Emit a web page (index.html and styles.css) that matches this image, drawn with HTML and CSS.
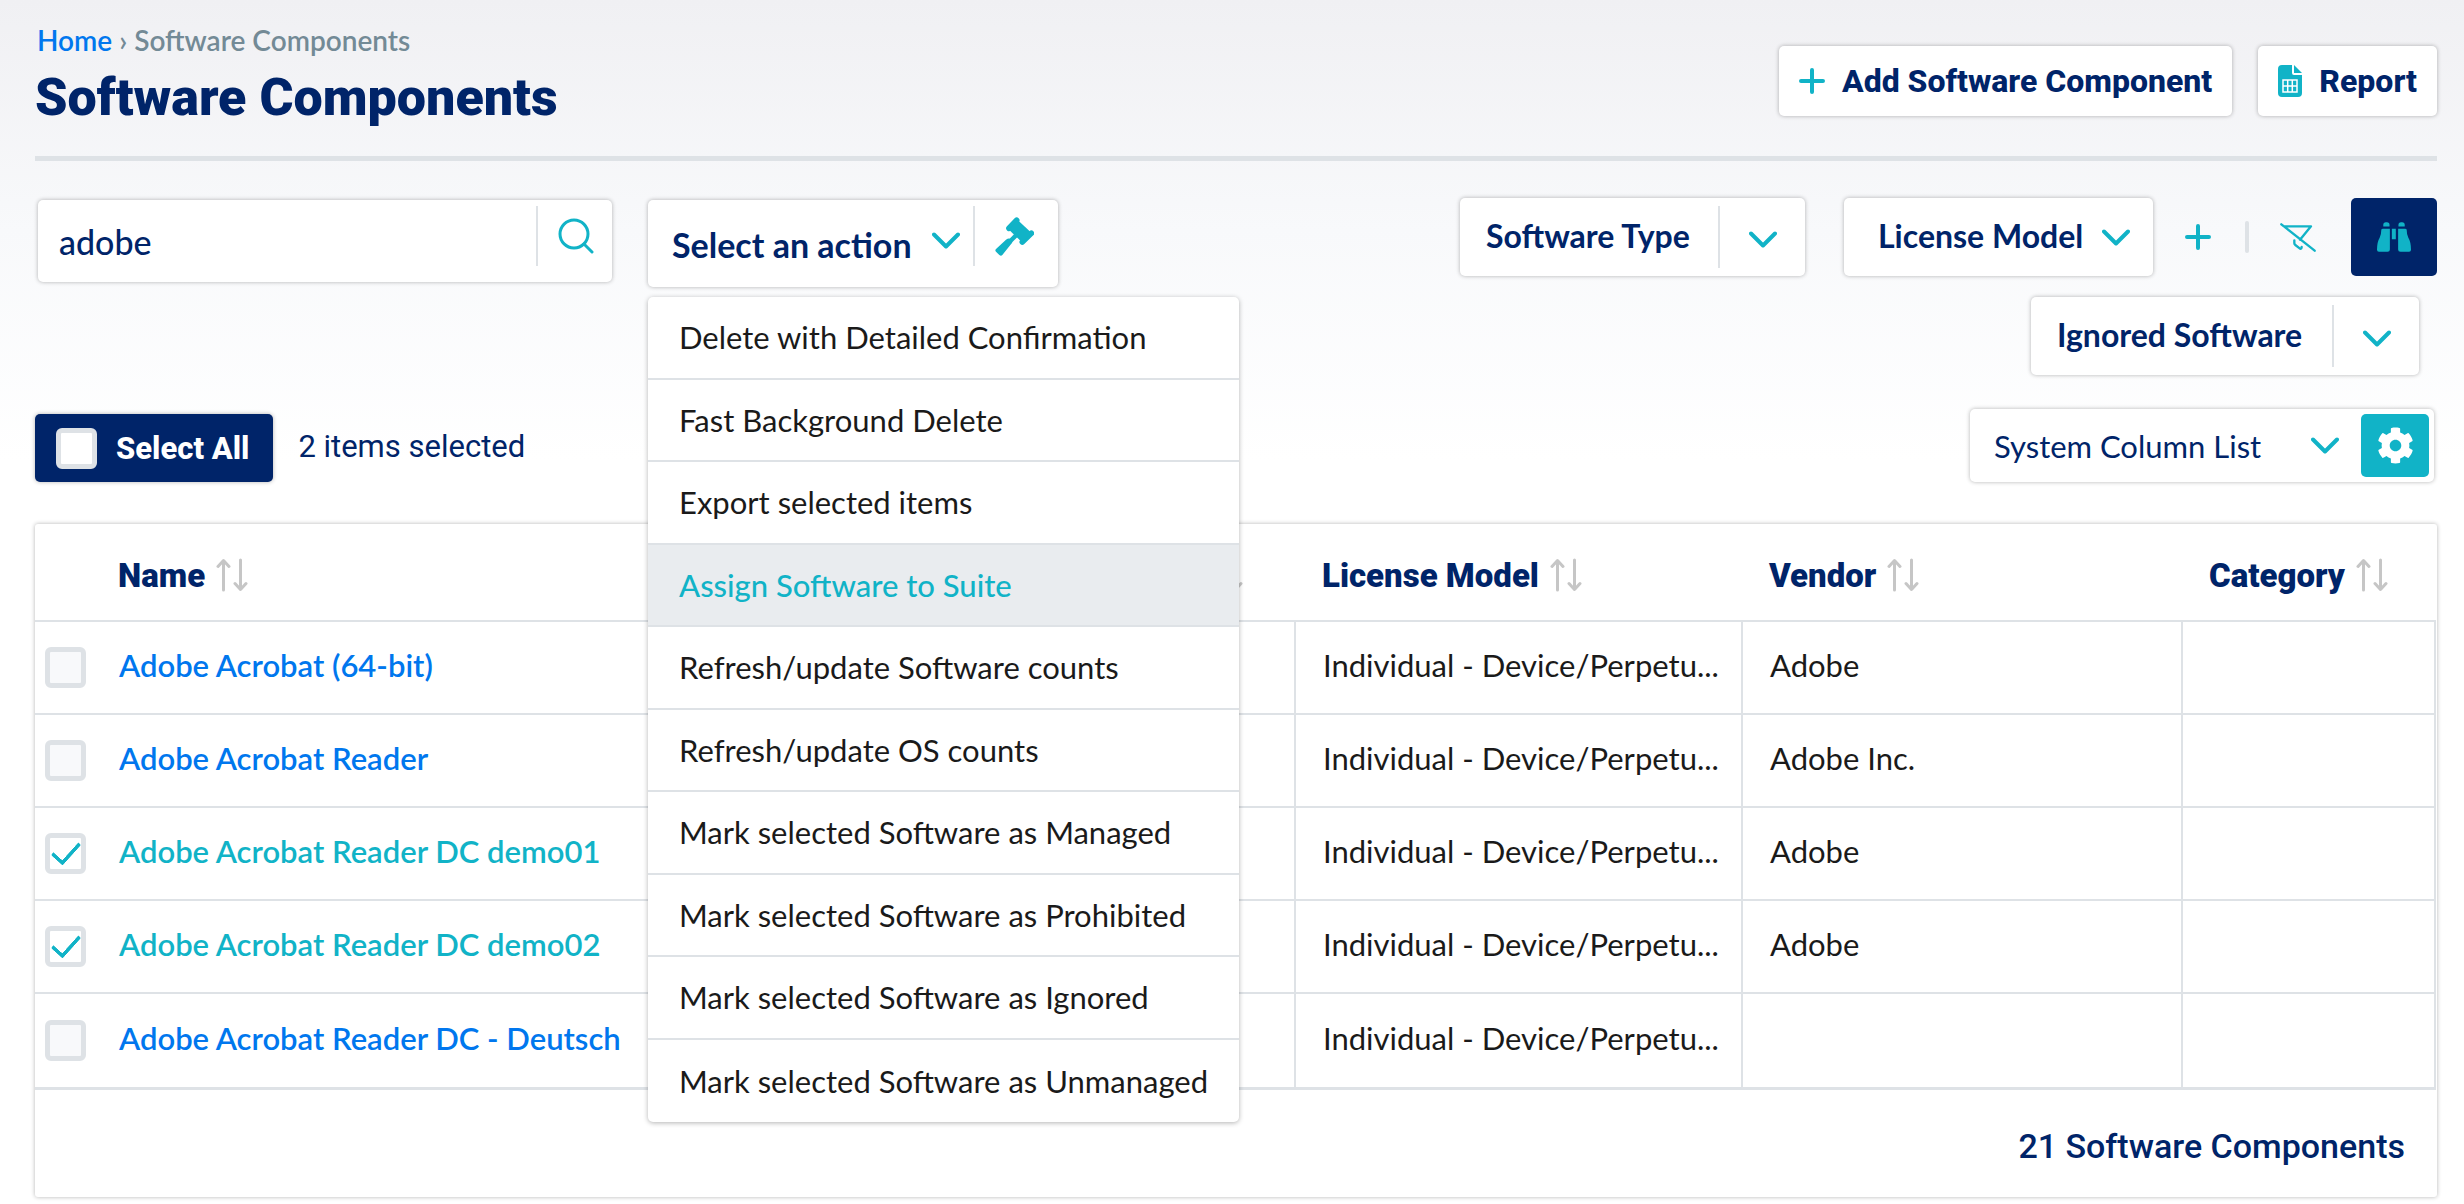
FILE: index.html
```html
<!DOCTYPE html>
<html lang="en">
<head>
<meta charset="utf-8">
<meta name="viewport" content="width=device-width, initial-scale=1">
<title>Software Components</title>
<link rel="stylesheet" href="styles.css">
</head>
<body>
<svg class="sprite" aria-hidden="true">
  <symbol id="chevron" viewBox="0 0 28 17"><path d="M2 2.500l12 12 12-12" fill="none" stroke="currentColor" stroke-width="4" stroke-linecap="round" stroke-linejoin="round"/></symbol>
  <symbol id="plus" viewBox="0 0 26 26"><path d="M13 2v22M2 13h22" fill="none" stroke="currentColor" stroke-width="4" stroke-linecap="round"/></symbol>
  <symbol id="sort" viewBox="0 0 32 34"><path d="M7.500 32V3M2 8.500L7.500 2.500 13 8.500M24.500 2v29M19 25.500l5.500 6 5.500-6" fill="none" stroke="currentColor" stroke-width="3" stroke-linecap="round" stroke-linejoin="round"/></symbol>
</svg>
<main class="page">
  <header class="page-head">
    <div class="heading">
      <nav class="breadcrumb" aria-label="Breadcrumb"><a href="#">Home</a> <span class="crumb-sep">›</span> <span>Software Components</span></nav>
      <h1>Software Components</h1>
    </div>
    <div class="head-actions">
      <button type="button" class="btn"><svg class="icon-plus"><use href="#plus"/></svg>Add Software Component</button>
      <button type="button" class="btn"><svg class="icon-file" viewBox="0 0 24 32"><path d="M4 0h10v8q0 2 2 2h8v18q0 4-4 4H4q-4 0-4-4V4Q0 0 4 0z"/><path d="M16 0l8 8h-8z"/><path class="cut" d="M5 15h14v12H5zM5 21h14M9.700 15v12M14.300 15v12"/></svg>Report</button>
    </div>
  </header>

  <section class="toolbar">
    <div class="toolbar-left">
      <form class="box search" role="search">
        <input type="text" value="adobe" aria-label="Search software components">
        <button type="button" class="split-icon" aria-label="Search"><svg class="icon-search" viewBox="0 0 36 36"><circle cx="16" cy="16" r="14"/><path d="M26 26l8 8"/></svg></button>
      </form>
      <div class="action">
        <div class="box action-box">
          <button type="button" class="action-toggle" aria-haspopup="menu" aria-expanded="true">Select an action <svg class="icon-chevron"><use href="#chevron"/></svg></button>
          <button type="button" class="split-icon" aria-label="Apply action"><svg class="icon-gavel" viewBox="0 0 117 117"><path d="M42 34L65 10M109 49L82 75" fill="none" stroke="currentColor" stroke-width="17" stroke-linecap="round"/><path d="M42 38L68 9 109 47 81 76z"/><path d="M66 52L44 74" fill="none" stroke="currentColor" stroke-width="13"/><path d="M3 96L33 68Q43 61 48 68L51 72Q53 76 49 80L22 114Q18 118 13 114L3 104Q-1 100 3 96z"/></svg></button>
        </div>
        <ul class="menu" role="menu">
          <li role="none"><button type="button" role="menuitem">Delete with Detailed Confirmation</button></li>
          <li role="none"><button type="button" role="menuitem">Fast Background Delete</button></li>
          <li role="none"><button type="button" role="menuitem">Export selected items</button></li>
          <li role="none"><button type="button" role="menuitem" class="active">Assign Software to Suite</button></li>
          <li role="none"><button type="button" role="menuitem">Refresh/update Software counts</button></li>
          <li role="none"><button type="button" role="menuitem">Refresh/update OS counts</button></li>
          <li role="none"><button type="button" role="menuitem">Mark selected Software as Managed</button></li>
          <li role="none"><button type="button" role="menuitem">Mark selected Software as Prohibited</button></li>
          <li role="none"><button type="button" role="menuitem">Mark selected Software as Ignored</button></li>
          <li role="none"><button type="button" role="menuitem">Mark selected Software as Unmanaged</button></li>
        </ul>
      </div>
    </div>

    <div class="filters">
      <div class="filter-row">
        <div class="box filter filter-type"><select aria-label="Software Type"><option>Software Type</option></select><span class="chevron-cell"><svg class="icon-chevron"><use href="#chevron"/></svg></span></div>
        <div class="box filter filter-license"><select aria-label="License Model"><option>License Model</option></select><svg class="icon-chevron"><use href="#chevron"/></svg></div>
        <div class="filter-tools">
          <button type="button" class="tool" aria-label="Add filter"><svg class="icon-plus"><use href="#plus"/></svg></button>
          <span class="tool-sep"></span>
          <button type="button" class="tool" aria-label="Clear filters"><svg class="icon-nofilter" viewBox="0 0 108 87"><path d="M4 4L104 83M12 10H93L60 50M43 52v9q0 3 3 5l14 11q5 1 5-5" /></svg></button>
          <button type="button" class="find" aria-label="Find"><svg class="icon-binoculars" viewBox="0 0 103 90"><path d="M19 13V8Q19 0 27 0h3q8 0 8 8v5zM65 13V8q0-8 8-8h3q8 0 8 8v5zM13 24q0-4 5-4h21v63q0 7-7 7H6q-6 0-6-6 0-24 8-37 5-8 5-23zM90 24q0-4-5-4H64v63q0 7 7 7h26q6 0 6-6 0-24-8-37-5-8-5-23zM45 20h12v32H45z"/></svg></button>
        </div>
      </div>
      <div class="box filter filter-ignored"><select aria-label="Ignored Software"><option>Ignored Software</option></select><span class="chevron-cell"><svg class="icon-chevron"><use href="#chevron"/></svg></span></div>
    </div>
  </section>

  <section class="selection">
    <label class="select-all"><input type="checkbox" class="check">Select All</label>
    <span class="selected-count">2 items selected</span>
    <div class="box columns"><select aria-label="Column list"><option>System Column List</option></select><svg class="icon-chevron"><use href="#chevron"/></svg><button type="button" class="gear" aria-label="Column settings"><svg class="icon-gear" viewBox="0 0 512 512"><path d="M487.400 315.700l-42.600-24.600c4.300-23.200 4.300-47 0-70.200l42.600-24.600c4.900-2.800 7.100-8.600 5.500-14-11.100-35.600-30-67.800-54.700-94.600-3.800-4.100-10-5.100-14.800-2.300L380.800 110c-17.900-15.400-38.500-27.300-60.800-35.100V25.800c0-5.600-3.900-10.500-9.400-11.700-36.700-8.200-74.300-7.800-109.200 0-5.500 1.200-9.400 6.100-9.400 11.700V75c-22.200 7.900-42.800 19.800-60.800 35.100L88.700 85.500c-4.900-2.800-11-1.900-14.800 2.300-24.700 26.700-43.600 58.900-54.700 94.600-1.700 5.400.6 11.200 5.500 14L67.300 221c-4.300 23.200-4.300 47 0 70.200l-42.600 24.600c-4.900 2.800-7.100 8.600-5.500 14 11.100 35.600 30 67.800 54.700 94.600 3.800 4.100 10 5.100 14.800 2.300l42.600-24.600c17.900 15.400 38.500 27.300 60.800 35.100v49.200c0 5.600 3.900 10.500 9.400 11.700 36.700 8.200 74.300 7.800 109.200 0 5.500-1.200 9.400-6.100 9.400-11.700v-49.200c22.200-7.900 42.800-19.800 60.800-35.100l42.600 24.600c4.900 2.800 11 1.900 14.800-2.300 24.700-26.700 43.600-58.900 54.700-94.600 1.500-5.500-.7-11.300-5.600-14.100zM256 336c-44.100 0-80-35.900-80-80s35.900-80 80-80 80 35.900 80 80-35.900 80-80 80z"/></svg></button></div>
  </section>

  <section class="panel">
    <table>
      <colgroup><col class="col-check"><col><col class="col-type"><col class="col-license"><col class="col-vendor"><col class="col-category"></colgroup>
      <thead>
        <tr>
          <td></td>
          <th scope="col"><button type="button">Name<svg class="icon-sort"><use href="#sort"/></svg></button></th>
          <th scope="col" class="type"><button type="button" aria-label="Sort"><svg class="icon-sort"><use href="#sort"/></svg></button></th>
          <th scope="col"><button type="button">License Model<svg class="icon-sort"><use href="#sort"/></svg></button></th>
          <th scope="col"><button type="button">Vendor<svg class="icon-sort"><use href="#sort"/></svg></button></th>
          <th scope="col"><button type="button">Category<svg class="icon-sort"><use href="#sort"/></svg></button></th>
        </tr>
      </thead>
      <tbody>
        <tr><td class="pick"><input type="checkbox" class="check" aria-labelledby="n1"></td><td><a href="#" id="n1">Adobe Acrobat (64-bit)</a></td><td></td><td>Individual - Device/Perpetu...</td><td>Adobe</td><td></td></tr>
        <tr><td class="pick"><input type="checkbox" class="check" aria-labelledby="n2"></td><td><a href="#" id="n2">Adobe Acrobat Reader</a></td><td></td><td>Individual - Device/Perpetu...</td><td>Adobe Inc.</td><td></td></tr>
        <tr class="selected"><td class="pick"><input type="checkbox" class="check" aria-labelledby="n3" checked></td><td><a href="#" id="n3">Adobe Acrobat Reader DC demo01</a></td><td></td><td>Individual - Device/Perpetu...</td><td>Adobe</td><td></td></tr>
        <tr class="selected"><td class="pick"><input type="checkbox" class="check" aria-labelledby="n4" checked></td><td><a href="#" id="n4">Adobe Acrobat Reader DC demo02</a></td><td></td><td>Individual - Device/Perpetu...</td><td>Adobe</td><td></td></tr>
        <tr><td class="pick"><input type="checkbox" class="check" aria-labelledby="n5"></td><td><a href="#" id="n5">Adobe Acrobat Reader DC - Deutsch</a></td><td></td><td>Individual - Device/Perpetu...</td><td></td><td></td></tr>
      </tbody>
    </table>
    <footer class="total">21 Software Components</footer>
  </section>
</main>
</body>
</html>
```
FILE: styles.css
```css
:root {
  --navy: #002469;
  --teal: #11b3c7;
  --blue: #0077ee;
  --line: #dee2e6;
  --ink: #1a1a1a;
  --body: Lato, "Liberation Sans", sans-serif;
  --display: Roboto, "Liberation Sans", sans-serif;
  --shadow: 0 0 4px rgba(0, 0, 0, 0.3);
}

* { box-sizing: border-box; }

body {
  margin: 0;
  background: #fff linear-gradient(#f0f0f3, #f8f9fb 230px, #fff 460px) no-repeat;
  color: var(--ink);
  font-family: var(--body);
  font-size: 31px;
}

button, input, select { font: inherit; color: inherit; }
button, select { cursor: pointer; }
button { padding: 0; border: 0; background: none; }
a { color: var(--blue); text-decoration: none; }
svg { display: block; flex: none; fill: currentColor; }
.sprite { position: absolute; width: 0; height: 0; }

.page { padding: 22px 27px 7px 35px; }

/* Header */
.page-head {
  display: flex;
  justify-content: space-between;
  align-items: flex-start;
  padding-bottom: 28px;
  border-bottom: 5px solid var(--line);
}
.breadcrumb {
  padding-left: 2px;
  font-size: 28px;
  font-weight: 600;
  line-height: 36px;
  color: #738a96;
}
h1 {
  margin: 10px 0 0;
  font-family: var(--display);
  font-size: 52px;
  font-weight: 900;
  line-height: 60px;
  color: var(--navy);
}
.head-actions { display: flex; gap: 26px; margin-top: 24px; }
.btn {
  display: flex;
  align-items: center;
  gap: 17px;
  height: 70px;
  padding: 0 20px;
  border-radius: 5px;
  background: #fff;
  box-shadow: var(--shadow);
  font-family: var(--display);
  font-size: 32px;
  font-weight: 800;
  color: var(--navy);
}
.btn svg { color: var(--teal); }

/* Icons */
.icon-plus { width: 26px; height: 26px; color: var(--teal); }
.icon-file { width: 24px; height: 32px; }
.icon-file .cut { fill: none; stroke: #fff; stroke-width: 1.5; }
.icon-chevron { width: 28px; height: 17px; color: var(--teal); }
.icon-search { width: 36px; height: 36px; fill: none; stroke: var(--teal); stroke-width: 3; stroke-linecap: round; }
.icon-gavel { width: 39px; height: 39px; color: var(--teal); }
.icon-nofilter { width: 36px; height: 29px; fill: none; stroke: var(--teal); stroke-width: 7; stroke-linecap: round; stroke-linejoin: round; }
.icon-binoculars { width: 34px; height: 30px; }
.icon-gear { width: 37px; height: 37px; }
.icon-sort { width: 32px; height: 34px; color: #c6c6c6; }

/* Toolbar */
.box {
  display: flex;
  align-items: center;
  border-radius: 5px;
  background: #fff;
  box-shadow: var(--shadow);
  color: var(--navy);
}
.toolbar {
  display: flex;
  justify-content: space-between;
  align-items: flex-start;
  padding-top: 37px;
}
.toolbar-left { display: flex; align-items: flex-start; gap: 36px; padding: 2px 0 0 3px; }
.search { width: 574px; height: 82px; }
.search input {
  flex: 1;
  min-width: 0;
  height: 100%;
  padding: 0 21px;
  border: 0;
  outline: 0;
  background: none;
  font-size: 34px;
  font-weight: 500;
}
.split-icon {
  display: flex;
  align-items: center;
  align-self: flex-start;
  height: 60px;
  margin-top: 6px;
  padding: 0 18px 0 20px;
  border-left: 2px solid var(--line);
}
.action { position: relative; }
.action-box { width: 410px; height: 87px; padding-right: 6px; }
.action-toggle {
  display: flex;
  flex: 1;
  align-items: center;
  justify-content: space-between;
  padding: 2px 13px 0 24px;
  font-size: 34px;
  font-weight: 700;
  white-space: nowrap;
}
.action-toggle svg { margin-top: -8px; }
.menu {
  position: absolute;
  top: 97px;
  left: 0;
  z-index: 2;
  display: grid;
  grid-auto-rows: 1fr;
  width: 591px;
  height: 825px;
  margin: 0;
  padding: 0;
  border-radius: 5px;
  background: #fff;
  box-shadow: 0 1px 5px rgba(0, 0, 0, 0.3);
  list-style: none;
  overflow: hidden;
}
.menu li { border-bottom: 2px solid var(--line); }
.menu li:last-child { border-bottom: 0; }
.menu button {
  width: 100%;
  height: 100%;
  padding: 0 31px;
  text-align: left;
  white-space: nowrap;
}
.menu .active { background: #e9ecef; color: var(--teal); font-weight: 500; }

.filters { display: flex; flex-direction: column; align-items: flex-end; gap: 21px; }
.filter-row { display: flex; }
.filter { height: 78px; font-size: 32px; font-weight: 700; }
select {
  flex: 1;
  min-width: 0;
  padding: 0;
  border: 0;
  outline: 0;
  background: none;
  appearance: none;
}
.filter select { padding-bottom: 3px; }
.chevron-cell {
  display: flex;
  align-items: center;
  height: 62px;
  padding: 4px 28px 0 29px;
  border-left: 2px solid var(--line);
}
.filter-type { width: 345px; padding-left: 26px; }
.filter-license { width: 309px; margin-left: 39px; padding: 0 23px 0 34px; }
.filter-ignored { width: 388px; margin-right: 18px; padding-left: 26px; }
.filter-tools { display: flex; align-items: center; padding-left: 32px; }
.tool-sep { width: 4px; height: 32px; margin: 0 31px 0 34px; border-radius: 2px; background: var(--line); }
.find {
  display: grid;
  place-items: center;
  width: 86px;
  height: 78px;
  margin-left: 35px;
  border-radius: 5px;
  background: var(--navy);
  color: var(--teal);
}

/* Selection bar */
.selection { display: flex; align-items: flex-end; margin-top: 34px; }
.select-all {
  display: flex;
  align-items: center;
  gap: 19px;
  height: 68px;
  padding: 0 24px 0 21px;
  border-radius: 5px;
  background: var(--navy);
  box-shadow: var(--shadow);
  font-family: var(--display);
  font-weight: 800;
  color: #fff;
}
.selected-count {
  flex: 1;
  padding-left: 25px;
  font-family: var(--display);
  line-height: 70px;
  color: var(--navy);
}
.columns { width: 464px; height: 73px; margin-right: 3px; padding: 0 5px 0 24px; }
.gear {
  display: grid;
  place-items: center;
  width: 68px;
  height: 63px;
  margin-left: 22px;
  border-radius: 5px;
  background: var(--teal);
  color: #fff;
}
.check {
  flex: none;
  display: grid;
  place-items: center;
  width: 41px;
  height: 41px;
  margin: 0;
  border: 5px solid var(--line);
  border-radius: 6px;
  background: #f8f9fb;
  appearance: none;
}
.select-all .check, .check:checked { background: #fff; }
.check:checked::before {
  content: "";
  width: 24px;
  height: 12px;
  margin-top: -8px;
  border: solid var(--teal);
  border-width: 0 0 4px 4px;
  border-radius: 2px;
  transform: rotate(-48deg);
}

/* Table */
.panel {
  margin-top: 42px;
  padding-right: 1px;
  border-radius: 3px;
  background: #fff;
  box-shadow: var(--shadow);
}
table { width: 100%; border-collapse: separate; border-spacing: 0; table-layout: fixed; }
.col-check { width: 57px; }
.col-type { width: 342px; }
.col-license { width: 447px; }
.col-vendor { width: 440px; }
.col-category { width: 253px; }
thead th, thead td {
  height: 98px;
  padding: 6px 0 0 26px;
  border-bottom: 2px solid var(--line);
  text-align: left;
}
th button {
  display: flex;
  align-items: center;
  gap: 11px;
  font-family: var(--display);
  font-size: 33px;
  font-weight: 900;
  color: var(--navy);
}
th.type { padding-right: 53px; }
th.type button { margin-left: auto; }
tbody td {
  height: 93px;
  padding: 0 0 6px 27px;
  border-right: 2px solid var(--line);
  border-bottom: 2px solid var(--line);
  white-space: nowrap;
}
tbody td.pick { padding: 0 0 0 10px; border-right: 0; }
tbody a { font-weight: 600; }
tbody .selected a { color: var(--teal); }
tbody tr:last-child td { height: 96px; border-bottom-width: 3px; }
.total {
  padding: 6px 31px 0;
  font-family: var(--display);
  font-size: 34px;
  font-weight: 500;
  line-height: 101px;
  text-align: right;
  color: var(--navy);
}
```
